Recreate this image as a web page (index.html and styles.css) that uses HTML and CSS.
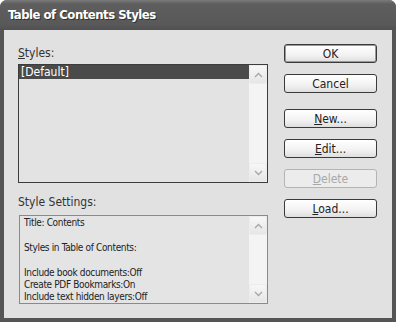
FILE: index.html
```html
<!DOCTYPE html>
<html lang="en">

<head>
    <meta charset="UTF-8">
    <title>Table of Contents Styles</title>
    <link rel="stylesheet" href="styles.css">
</head>

<body>

    <div class="window">
        <div class="titlebar">Table of Contents Styles</div>

        <div class="frame">
            <div class="left">
                <div class="label label-styles"><u>S</u>tyles:</div>
                <div class="listbox">
                    <div class="list-items">
                        <div class="item selected">[Default]</div>
                    </div>
                    <div class="scrollbar">
                        <div class="arrow"><svg width="9" height="6" viewBox="0 0 9 6"><path d="M1 5 L4.5 1.5 L8 5" fill="none" stroke="#a8a8a8" stroke-width="1.4"/></svg></div>
                        <div class="arrow"><svg width="9" height="6" viewBox="0 0 9 6"><path d="M1 1 L4.5 4.5 L8 1" fill="none" stroke="#a8a8a8" stroke-width="1.4"/></svg></div>
                    </div>
                </div>

                <div class="label label-settings">Style Settings:</div>
                <div class="settings">
                    <div class="settings-text">
                        <p>Title: Contents</p>
                        <p>&nbsp;</p>
                        <p>Styles in Table of Contents:</p>
                        <p>&nbsp;</p>
                        <p>Include book documents:Off</p>
                        <p>Create PDF Bookmarks:On</p>
                        <p>Include text hidden layers:Off</p>
                    </div>
                    <div class="scrollbar">
                        <div class="arrow"><svg width="9" height="6" viewBox="0 0 9 6"><path d="M1 5 L4.5 1.5 L8 5" fill="none" stroke="#a8a8a8" stroke-width="1.4"/></svg></div>
                        <div class="arrow"><svg width="9" height="6" viewBox="0 0 9 6"><path d="M1 1 L4.5 4.5 L8 1" fill="none" stroke="#a8a8a8" stroke-width="1.4"/></svg></div>
                    </div>
                </div>
            </div>

            <div class="buttons">
                <button class="btn default">OK</button>
                <button class="btn">Cancel</button>
                <button class="btn group"><u>N</u>ew...</button>
                <button class="btn"><u>E</u>dit...</button>
                <button class="btn disabled"><u>D</u>elete</button>
                <button class="btn"><u>L</u>oad...</button>
            </div>
        </div>
    </div>

</body>

</html>
```

FILE: styles.css
```css
body {
    margin: 0;
    padding: 0;
    background-color: #ffffff;
    font-family: "DejaVu Sans Condensed", "DejaVu Sans", sans-serif;
    color: #222;
}

.window {
    width: 396px;
    height: 322px;
    display: flex;
    flex-direction: column;
    border-radius: 7px 7px 0 0;
    overflow: hidden;
    background-color: #555;
}

.titlebar {
    height: 30px;
    line-height: 30px;
    padding-left: 8px;
    background: linear-gradient(#7a7a7a, #5e5e5e 4px, #595959 24px, #505050);
    color: white;
    font-weight: bold;
    font-size: 13px;
    letter-spacing: -0.5px;
    text-shadow: 1px 1px 0 #333;
}

.frame {
    flex: 1;
    display: flex;
    margin: 0 4px 4px 4px;
    background-color: #e1e1e1;
    padding-left: 14px;
}

.left {
    width: 250px;
}

.label {
    font-size: 12px;
    line-height: 13px;
    color: #333;
}

.label-styles {
    margin-top: 17px;
    margin-bottom: 4px;
}

.label-settings {
    margin-top: 13px;
    margin-bottom: 6px;
}

.listbox {
    height: 117px;
    display: flex;
    border: 1px solid #3c3c3c;
    background-color: #e3e3e3;
}

.list-items {
    flex: 1;
}

.item {
    height: 14px;
    line-height: 14px;
    padding-left: 2px;
    font-size: 12px;
}

.selected {
    background-color: #4a4a4a;
    color: white;
}

.scrollbar {
    width: 18px;
    display: flex;
    flex-direction: column;
    justify-content: space-between;
    background-color: #f4f4f4;
}

.arrow {
    height: 17px;
    display: flex;
    align-items: center;
    justify-content: center;
    background: linear-gradient(#f7f7f7, #e6e6e6);
    border: 1px solid #ececec;
    border-radius: 2px;
}

.settings {
    height: 87px;
    margin-left: 1px;
    display: flex;
    border: 1px solid #8a8a8a;
    background-color: #e4e4e4;
}

.settings-text {
    flex: 1;
    padding: 1px 0 0 4px;
    font-size: 10px;
    letter-spacing: -0.35px;
    color: #222;
}

p {
    margin: 0;
    line-height: 12.4px;
}

.buttons {
    display: flex;
    flex-direction: column;
    margin-left: 16px;
    padding-top: 14px;
}

.btn {
    width: 93px;
    height: 19px;
    margin-bottom: 11px;
    padding: 0;
    font-family: "DejaVu Sans Condensed", "DejaVu Sans", sans-serif;
    font-size: 12px;
    color: #222;
    background: linear-gradient(#ffffff, #f2f2f2 60%, #dedede);
    border: 1px solid #3a3a3a;
    border-radius: 3px;
}

.default {
    box-shadow: inset 0 0 0 1px #9a9a9a;
}

.group {
    margin-top: 5px;
}

.disabled {
    color: #a8a8a8;
    border-color: #b4b4b4;
    background: #ececec;
}
```
